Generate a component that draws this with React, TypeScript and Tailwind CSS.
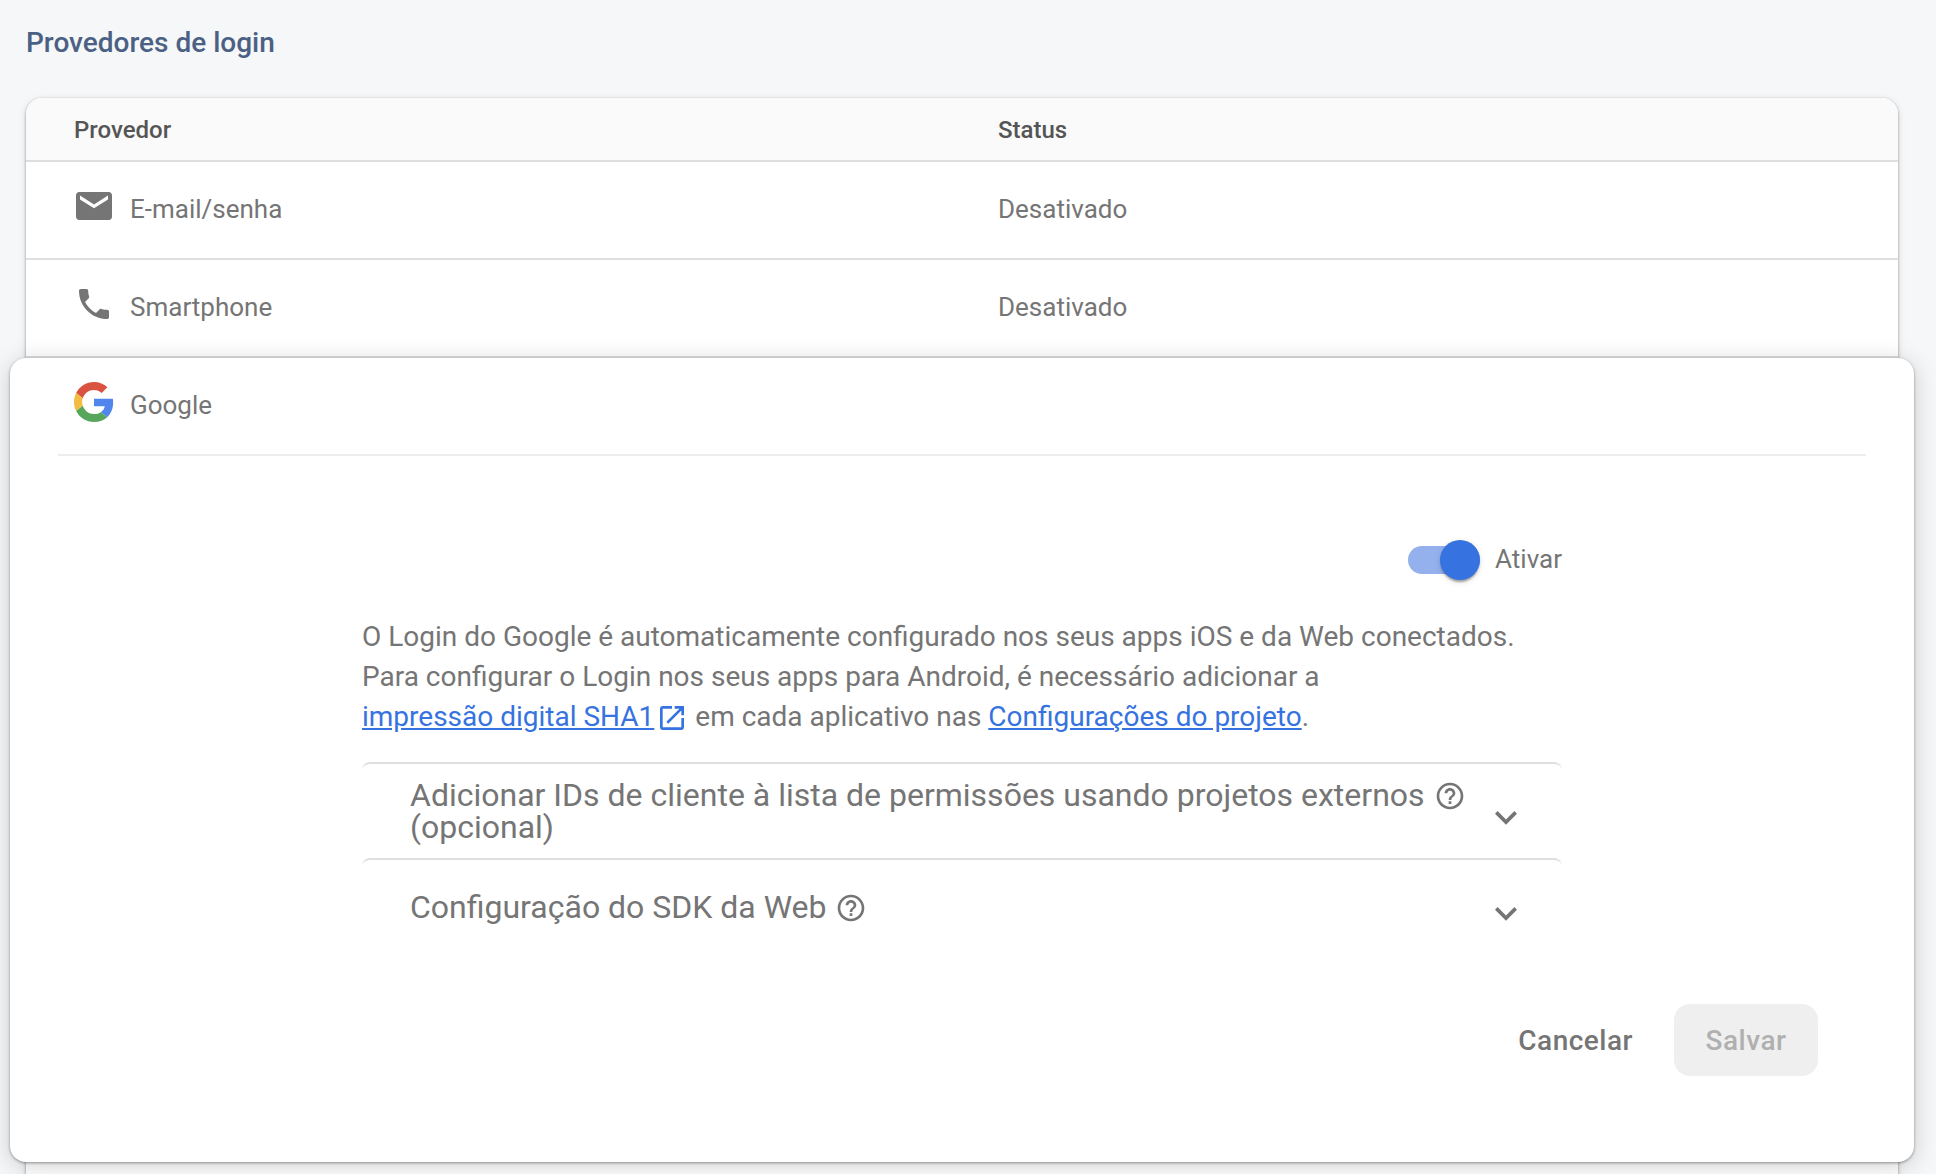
import type { ReactNode } from "react";

function MailIcon() {
  return (
    <svg viewBox="0 0 20 20" className="size-10 shrink-0 fill-[#757575]">
      <path d="M17.4 3H2.6C1.7 3 1 3.7 1 4.6v10.8c0 .9.7 1.6 1.6 1.6h14.8c.9 0 1.6-.7 1.6-1.6V4.6C19 3.7 18.3 3 17.4 3zM17 6.7l-7 4.4-7-4.4V4.8l7 4.4 7-4.4z" />
    </svg>
  );
}

function PhoneIcon() {
  return (
    <svg viewBox="0 0 24 24" className="size-10 shrink-0 fill-[#757575]">
      <path d="M6.62 10.79c1.44 2.83 3.76 5.14 6.59 6.59l2.2-2.2c.27-.27.67-.36 1.02-.24 1.12.37 2.33.57 3.57.57.55 0 1 .45 1 1V20c0 .55-.45 1-1 1-9.39 0-17-7.61-17-17 0-.55.45-1 1-1h3.5c.55 0 1 .45 1 1 0 1.25.2 2.45.57 3.57.11.35.03.74-.25 1.02l-2.2 2.2z" />
    </svg>
  );
}

function GoogleIcon() {
  return (
    <svg viewBox="0 0 48 48" className="size-10 shrink-0">
      <path fill="#DA5341" d="M24 9.5c3.54 0 6.71 1.22 9.21 3.6l6.85-6.85C35.9 2.38 30.47 0 24 0 14.62 0 6.51 5.38 2.56 13.22l7.98 6.19C12.43 13.72 17.74 9.5 24 9.5z" />
      <path fill="#5086EC" d="M46.98 24.55c0-1.57-.15-3.09-.38-4.55H24v9.02h12.94c-.58 2.96-2.26 5.48-4.78 7.18l7.73 6c4.51-4.18 7.09-10.36 7.09-17.65z" />
      <path fill="#F2BD42" d="M10.53 28.59c-.48-1.45-.76-2.99-.76-4.59s.27-3.14.76-4.59l-7.98-6.19C.92 16.46 0 20.12 0 24c0 3.88.92 7.54 2.56 10.78l7.97-6.19z" />
      <path fill="#58A65C" d="M24 48c6.48 0 11.93-2.13 15.89-5.81l-7.73-6c-2.15 1.45-4.92 2.3-8.16 2.3-6.26 0-11.57-4.22-13.47-9.91l-7.98 6.19C6.51 42.62 14.62 48 24 48z" />
    </svg>
  );
}

function OpenInNewIcon() {
  return (
    <svg viewBox="0 0 24 24" className="ml-0.5 inline-block size-8 align-[-8px] fill-[#3673E0]">
      <path d="M19 19H5V5h7V3H5c-1.11 0-2 .9-2 2v14c0 1.1.89 2 2 2h14c1.1 0 2-.9 2-2v-7h-2v7zM14 3v2h3.59l-9.83 9.83 1.41 1.41L19 6.41V10h2V3h-7z" />
    </svg>
  );
}

function HelpIcon() {
  return (
    <svg viewBox="0 0 24 24" className="ml-px inline-block size-8 translate-y-px align-[-5px] fill-[#757575]">
      <path d="M11 18h2v-2h-2v2zm1-16C6.48 2 2 6.48 2 12s4.48 10 10 10 10-4.48 10-10S17.52 2 12 2zm0 18c-4.41 0-8-3.59-8-8s3.59-8 8-8 8 3.59 8 8-3.59 8-8 8zm0-14c-2.21 0-4 1.79-4 4h2c0-1.1.9-2 2-2s2 .9 2 2c0 2-3 1.75-3 5h2c0-2.25 3-2.5 3-5 0-2.21-1.79-4-4-4z" />
    </svg>
  );
}

function ChevronDown() {
  return (
    <svg viewBox="0 0 22 14" className="mr-[45px] mt-[47px] h-3.5 w-[22px] shrink-0 fill-[#757575]">
      <path d="M2.6 0 11 8.4 19.4 0 22 2.8 11 13.8 0 2.8z" />
    </svg>
  );
}

function ProviderRow({ icon, name, status }: { icon: ReactNode; name: string; status: string }) {
  return (
    <div className="flex h-[98px] border-b-2 border-[#DFDFDF] pl-12 pt-6 text-[26px] leading-[30px] text-[#757575]">
      <div className="flex w-[924px] gap-4">
        {icon}
        <span className="pt-2">{name}</span>
      </div>
      <span className="pt-2">{status}</span>
    </div>
  );
}

function Panel({ children, className }: { children: ReactNode; className: string }) {
  return (
    <div className="flex h-24 items-start justify-between rounded-t-lg border-t-2 border-[#DFDFDF] pl-12">
      <div className={`text-[32px] leading-8 text-[#757575] ${className}`}>{children}</div>
      <ChevronDown />
    </div>
  );
}

function Toggle() {
  return (
    <div className="relative my-1.5 h-7 w-[72px] rounded-full bg-[#94B1EE]">
      <div className="absolute -top-1.5 right-0 size-10 rounded-full bg-[#3673E0] shadow-[0_4px_2px_-2px_rgba(0,0,0,0.2),0_2px_2px_rgba(0,0,0,0.14),0_2px_6px_rgba(0,0,0,0.12)]" />
    </div>
  );
}

export default function App() {
  return (
    <div className="h-[1174px] overflow-hidden bg-[#F6F7F9] font-[Roboto,sans-serif]">
      <h1 className="ml-[26px] pt-[26px] text-[28px] font-medium leading-[33px] text-[#4B6183]">
        Provedores de login
      </h1>
      <div className="ml-[26px] mt-[39px] h-[1100px] w-[1872px] rounded-2xl bg-white shadow-[0_1px_3px_rgba(0,0,0,0.38),0_2px_8px_rgba(0,0,0,0.1)]">
        <div className="flex h-16 rounded-t-2xl border-b-2 border-[#DEDEDE] bg-[#FAFAFA] pl-12 pt-[18px] text-2xl font-medium leading-7 text-[#555555]">
          <span className="w-[924px]">Provedor</span>
          <span>Status</span>
        </div>
        <ProviderRow icon={<MailIcon />} name="E-mail/senha" status="Desativado" />
        <ProviderRow icon={<PhoneIcon />} name="Smartphone" status="Desativado" />

        <section className="-mx-4 h-[804px] rounded-2xl bg-white shadow-[0_1px_3px_rgba(0,0,0,0.38),0_4px_24px_rgba(0,0,0,0.18)]">
          <div className="mx-12 flex h-[98px] gap-4 border-b-2 border-[#EDEDED] pl-4 pt-6 text-[26px] leading-[30px] text-[#757575]">
            <GoogleIcon />
            <span className="pt-2">Google</span>
          </div>

          <div className="mx-auto w-[1200px] pt-[84px] text-[#757575]">
            <div className="flex justify-end gap-[15px] text-[26px] leading-[30px]">
              <Toggle />
              <span className="pt-1">Ativar</span>
            </div>
            <p className="mt-[37px] text-[28px] leading-10">
              O Login do Google é automaticamente configurado nos seus apps iOS e da Web conectados.
              <br />
              Para configurar o Login nos seus apps para Android, é necessário adicionar a
              <br />
              <a className="text-[#3673E0] underline">impressão digital SHA1</a>
              <OpenInNewIcon /> em cada aplicativo nas{" "}
              <a className="text-[#3673E0] underline">Configurações do projeto</a>.
            </p>
            <div className="mt-[25px]">
              <Panel className="mt-[15px]">
                Adicionar IDs de cliente à lista de permissões usando projetos externos <HelpIcon />
                <br />
                (opcional)
              </Panel>
              <Panel className="mt-[31px]">
                Configuração do SDK da Web <HelpIcon />
              </Panel>
            </div>
          </div>

          <div className="mr-24 mt-[50px] flex h-[72px] justify-end text-[28px] font-medium leading-[33px] tracking-[0.5px]">
            <button className="flex items-start pl-8 pr-[41px] pt-5 text-[#757575]">Cancelar</button>
            <button className="flex w-36 items-start justify-center rounded-2xl bg-[#EFEFEF] pt-5 text-[#B0B0B0]">
              Salvar
            </button>
          </div>
        </section>
      </div>
    </div>
  );
}
